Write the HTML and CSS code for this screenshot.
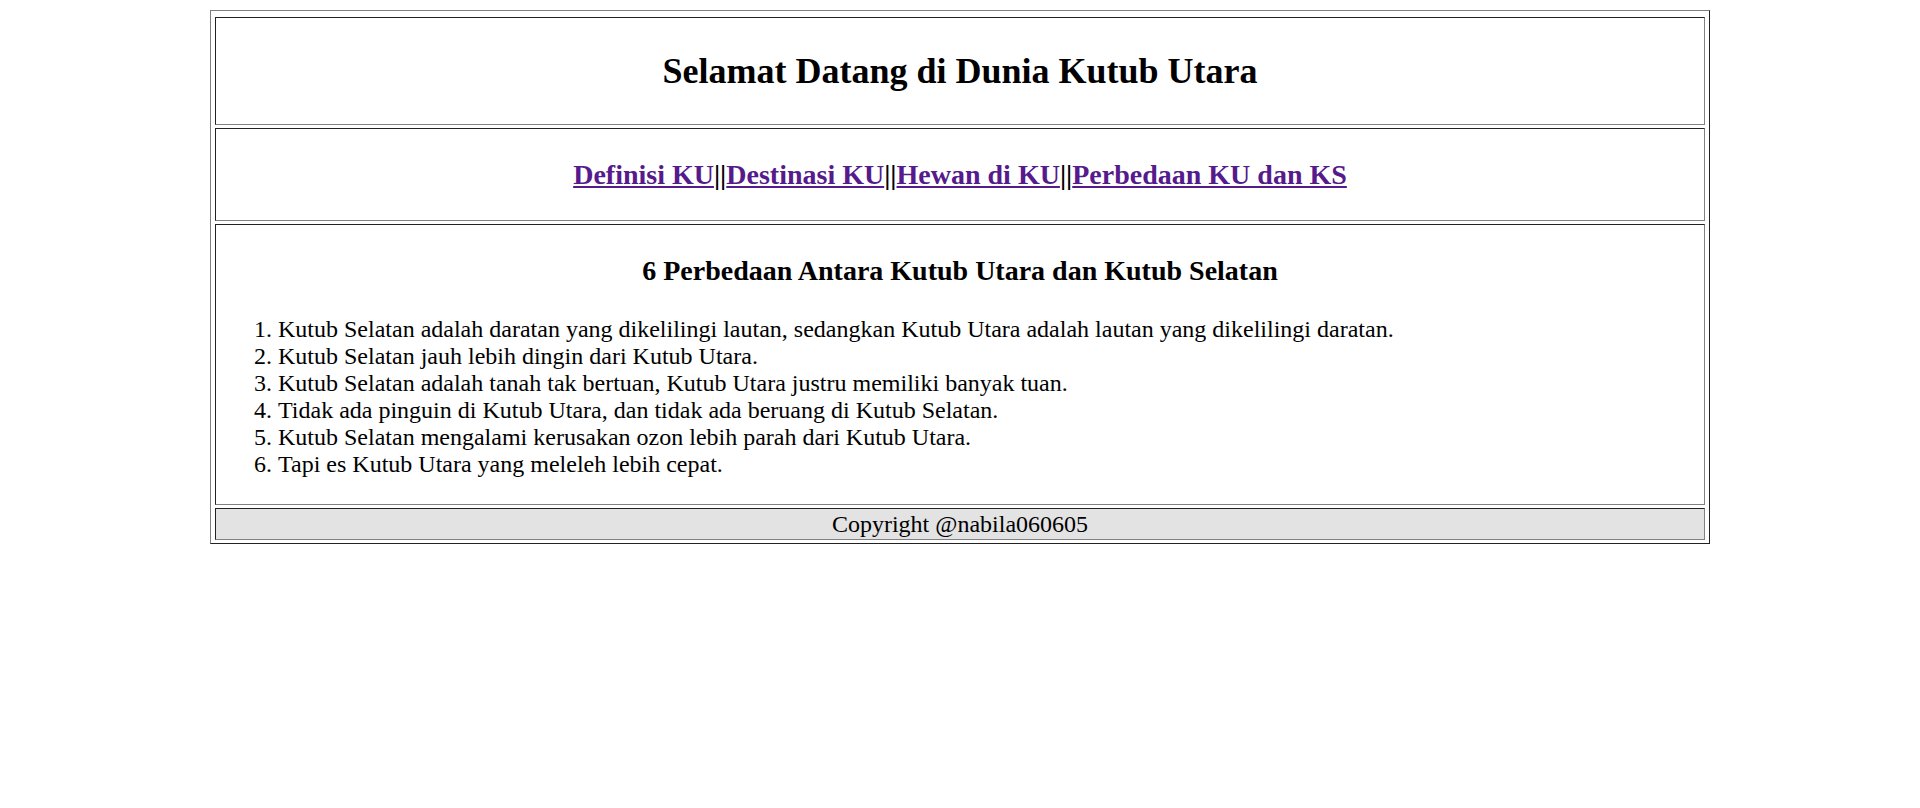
FILE: index.html
```html
<!DOCTYPE html>
<html>
<head>
<meta charset="utf-8">
<title>Kutub Utara</title>
<link rel="stylesheet" href="styles.css">
</head>
<body>
<table class="layout">
  <tr>
    <td class="cell header-cell"><h2 class="title">Selamat Datang di Dunia Kutub Utara</h2></td>
  </tr>
  <tr>
    <td class="cell nav-cell"><h3 class="nav"><a href="#" class="nav-link">Definisi KU</a>||<a href="#" class="nav-link">Destinasi KU</a>||<a href="#" class="nav-link">Hewan di KU</a>||<a href="#" class="nav-link">Perbedaan KU dan KS</a></h3></td>
  </tr>
  <tr>
    <td class="cell content-cell">
      <h3 class="content-title">6 Perbedaan Antara Kutub Utara dan Kutub Selatan</h3>
      <ol class="facts">
        <li>Kutub Selatan adalah daratan yang dikelilingi lautan, sedangkan Kutub Utara adalah lautan yang dikelilingi daratan.</li>
        <li>Kutub Selatan jauh lebih dingin dari Kutub Utara.</li>
        <li>Kutub Selatan adalah tanah tak bertuan, Kutub Utara justru memiliki banyak tuan.</li>
        <li>Tidak ada pinguin di Kutub Utara, dan tidak ada beruang di Kutub Selatan.</li>
        <li>Kutub Selatan mengalami kerusakan ozon lebih parah dari Kutub Utara.</li>
        <li>Tapi es Kutub Utara yang meleleh lebih cepat.</li>
      </ol>
    </td>
  </tr>
  <tr>
    <td class="cell footer-cell">Copyright @nabila060605</td>
  </tr>
</table>
</body>
</html>
```

FILE: styles.css
```css
html, body {
  background: #ffffff;
}
body {
  margin: 10px 12px;
  font-family: "Liberation Serif", "Times New Roman", serif;
  font-size: 24px;
  color: #000000;
}
.layout {
  width: 1500px;
  margin: 0 auto;
  border: 1px solid;
  border-color: #808080 #222222 #222222 #808080;
  border-spacing: 4px 3px;
  padding-top: 3px;
}
.cell {
  border: 1px solid;
  border-color: #222222 #808080 #808080 #222222;
  padding: 1px 2px;
  text-align: center;
}
.title {
  font-size: 36px;
  font-weight: bold;
  margin: 31px 0;
  line-height: 42px;
}
.nav {
  font-size: 28px;
  font-weight: bold;
  margin: 28px 0;
  line-height: 33px;
}
.nav-link {
  color: #551a8b;
  text-decoration: underline;
}
.content-cell {
  text-align: left;
}
.content-title {
  font-size: 28px;
  font-weight: bold;
  margin: 28px 0;
  line-height: 33px;
  text-align: center;
}
.facts {
  margin: 29px 0 25px;
  padding-left: 60px;
  line-height: 27px;
}
.footer-cell {
  background: #e3e3e3;
  line-height: 28px;
}
```
